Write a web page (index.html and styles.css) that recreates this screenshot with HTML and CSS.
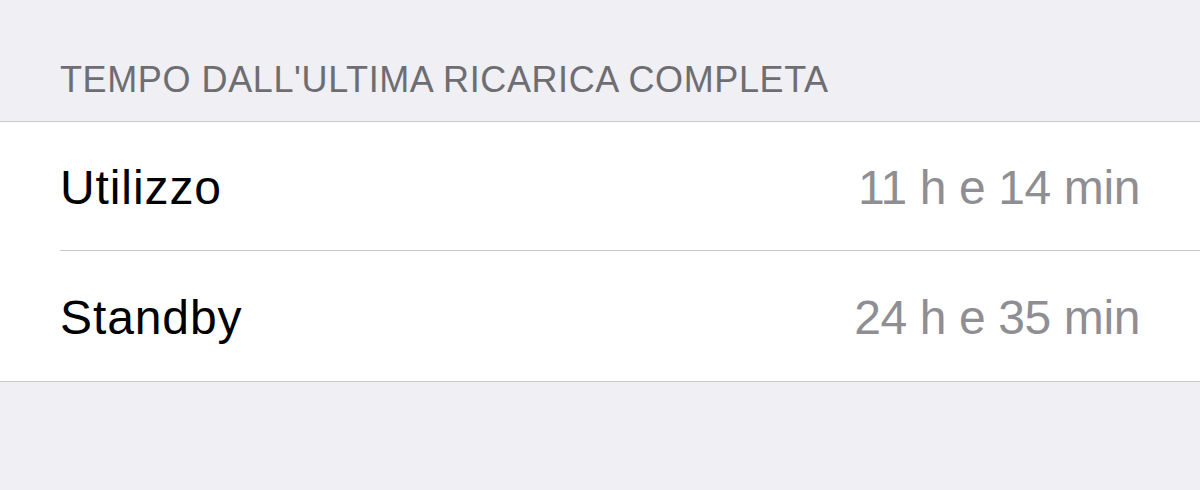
FILE: index.html
```html
<!DOCTYPE html>
<html>
	<head>
		<meta charset="UTF-8">
		<title>Batteria</title>
		<link rel="stylesheet" href="styles.css">
	</head>
	<body>
	<div class="header">TEMPO DALL'ULTIMA RICARICA COMPLETA</div>
	<ul class="list">
		<li>
			<span class="label">Utilizzo</span>
			<span class="value">11 h e 14 min</span>
		</li>
		<li>
			<span class="label">Standby</span>
			<span class="value">24 h e 35 min</span>
		</li>
	</ul>
	</body>
</html>
```

FILE: styles.css
```css
body{
    margin:0;
    background-color:#efeff4;
    font-family:"Liberation Sans", Arial, sans-serif;
}
.header{
    padding:62px 60px 23px;
    line-height:36px;
    font-size:36px;
    letter-spacing:0.6px;
    color:#6d6d72;
    border-bottom:1px solid #c8c7cc;
}
.list{
    list-style:none;
    margin:0;
    padding:0 0 0 60px;
    background-color:#fff;
    border-bottom:1px solid #c8c7cc;
}
.list li{
    display:flex;
    justify-content:space-between;
    align-items:center;
    height:128px;
    padding:2px 60px 0 0;
    box-sizing:border-box;
    font-size:48px;
}
.list li + li{
    height:131px;
    border-top:1px solid #c8c7cc;
}
.label{
    color:#000;
    letter-spacing:0.9px;
}
.value{
    color:#8e8e93;
    letter-spacing:-0.4px;
}
```
